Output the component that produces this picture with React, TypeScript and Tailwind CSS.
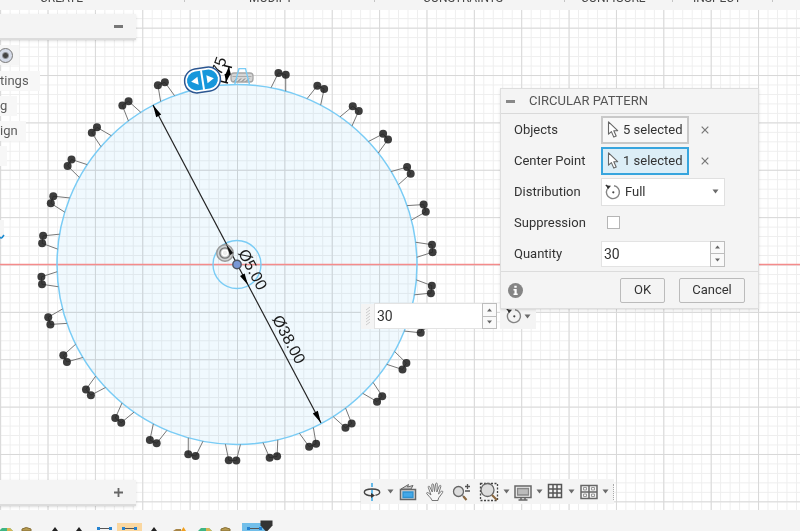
import React, { useState } from "react";

const CX = 237;
const CY = 264.5;
const R = 180;
const UNIT = 180 / 19;

function polar(radius: number, degrees: number) {
  const a = (degrees * Math.PI) / 180;
  return { x: CX + radius * Math.sin(a), y: CY - radius * Math.cos(a) };
}

// One patterned tooth: two end points joined to the rim of the big circle.
function Tooth({ angle }: { angle: number }) {
  const a = polar(R, angle - 2.4);
  const b = polar(196, angle - 1.1);
  const c = polar(196, angle + 1.1);
  const d = polar(R, angle + 2.4);
  return (
    <g>
      <path d={`M${a.x} ${a.y}L${b.x} ${b.y}L${c.x} ${c.y}L${d.x} ${d.y}`} fill="none" stroke="#777" strokeWidth="1" />
      <circle cx={b.x} cy={b.y} r="4" fill="#222" fillOpacity="0.88" />
      <circle cx={c.x} cy={c.y} r="4" fill="#222" fillOpacity="0.88" />
    </g>
  );
}

function GridLines() {
  const major = UNIT * 5;
  return (
    <>
      <defs>
        <pattern id="minor" x={CX} y={CY} width={UNIT} height={UNIT} patternUnits="userSpaceOnUse">
          <path d={`M0.5 0V${UNIT}M0 0.5H${UNIT}`} stroke="#eeeeee" strokeWidth="1" />
        </pattern>
        <pattern id="major" x={CX} y={CY} width={major} height={major} patternUnits="userSpaceOnUse">
          <path d={`M0.5 0V${major}M0 0.5H${major}`} stroke="#d8d8d8" strokeWidth="1" />
        </pattern>
      </defs>
      <rect width="100%" height="2000" fill="url(#minor)" />
      <rect width="100%" height="2000" fill="url(#major)" />
    </>
  );
}

function Sketch() {
  const teeth = Array.from({ length: 28 }, (_, i) => 13.3 + i * 12);
  return (
    <svg className="absolute inset-0 h-full w-full" aria-label="Sketch canvas">
      <g transform="translate(0 -10)">
        <circle cx={CX} cy={CY} r={R} fill="#f0f9fe" />
        <g className="mix-blend-multiply">
          <GridLines />
        </g>
        <path d="M0 264.5H4000" stroke="#f58b8b" strokeWidth="1.6" />
        <circle cx={CX} cy={CY} r={R} fill="none" stroke="#7accf5" strokeWidth="1.5" />
        <circle cx={CX} cy={CY} r="24" fill="none" stroke="#7accf5" strokeWidth="1.4" />
        {teeth.map((t) => (
          <Tooth key={t} angle={t} />
        ))}

        <path d="M153 105L321 423" stroke="#222" strokeWidth="1.2" />
        <path d="M153 105l8.2 9.6-5 2.6zM321 423l-8.2-9.6 5-2.6z" fill="#000" />
        <path d="M226 244l8 9-4.6 2.6zM248 285l-8-9 4.6-2.6z" fill="#000" />

        <g fontFamily="Liberation Sans, Arial, sans-serif" fontSize="16" fill="#1b1b1b">
          <text textAnchor="middle" transform="translate(248 272) rotate(62)">Ø5.00</text>
          <text textAnchor="middle" transform="translate(284 342) rotate(62)">Ø38.00</text>
          <text transform="translate(221 76) rotate(-70)">75</text>
        </g>

        <g fill="none" stroke="#999">
          <circle cx="225" cy="253" r="8.2" fill="#c9c9c9" fillOpacity="0.8" strokeWidth="1.4" />
          <circle cx="225" cy="253" r="5.2" stroke="#777" strokeWidth="1.3" />
          <circle cx="225" cy="253" r="2.8" fill="#eee" stroke="#fff" strokeWidth="1.3" />
        </g>
        <path d="M226 244l7 9-3 2z" fill="#111" />
        <circle cx={CX} cy={CY} r="4.2" fill="#7897d6" stroke="#4c5362" strokeWidth="1.4" />

        <path d="M224 65.500l8 2M220 81l8 2M229 67l-3 15" stroke="#111" strokeWidth="1.4" />
        <path d="M229 67l2 8h-6zM226 82l-1.500-8h6z" fill="#000" />
        <rect x="231" y="73" width="22" height="9" rx="3" fill="#d5d5d5" stroke="#a5a5a5" strokeWidth="1.3" />
        <path d="M232.500 76.500h19" stroke="#aaa" />
        <path d="M234 81.500l3-3M238 81.500l3-3M242 81.500l3-3M246 81.500l3-3" stroke="#777" />
        <path d="M234.700 84.500L239 68.600h6.500l4 16" fill="none" stroke="#7accf5" strokeWidth="1.4" />

        <g transform="translate(202.500 80) rotate(-9)">
          <rect x="-18" y="-12" width="36" height="24" rx="12" fill="#fff" stroke="#2b5691" strokeWidth="1.5" />
          <rect x="-15.500" y="-9.500" width="31" height="19" rx="9.500" fill="#1797db" />
          <path d="M0-10V10" stroke="#fff" strokeWidth="2" />
          <path d="M-11.500 0l7-4v8zM11.500 0l-7-4v8z" fill="#fff" />
        </g>
      </g>
    </svg>
  );
}

function Caret() {
  return (
    <svg width="7" height="5" viewBox="0 0 7 5" aria-hidden="true">
      <path d="M0.500 0.500h6L3.500 4.500z" fill="#6b6b6b" />
    </svg>
  );
}

function CursorIcon() {
  return (
    <svg width="12" height="17" viewBox="0 0 12 17" aria-hidden="true">
      <path
        d="M1.500 .8v12.400l2.900-2.600 2.400 5.500 2.400-1-2.400-5.300 3.900-.2z"
        fill="#fff"
        stroke="#666"
        strokeWidth="1.100"
        strokeLinejoin="round"
      />
    </svg>
  );
}

function FullCircleIcon() {
  return (
    <svg width="16" height="16" viewBox="0 0 16 16" fill="none" aria-hidden="true">
      <path d="M9 1.700a6.500 6.500 0 1 1-6.900 3.500" stroke="#858585" strokeWidth="1.400" />
      <path d="M1.500 1.500l4.500.3-3.300 4z" fill="#333" />
      <path d="M.8 1l3 2.500" stroke="#333" strokeWidth="1.400" />
      <circle cx="8.300" cy="8.300" r="1.100" fill="#444" />
    </svg>
  );
}

function CrossButton({ label }: { label: string }) {
  return (
    <button aria-label={label} className="ml-2 flex h-4 w-4 items-center justify-center">
      <svg width="8" height="8" viewBox="0 0 8 8" aria-hidden="true">
        <path d="M.7.7l6.600 6.600M7.300.7L.7 7.300" stroke="#777" strokeWidth="1.200" />
      </svg>
    </button>
  );
}

type NumberBoxProps = { id: string; label?: string; value: number; onChange: (n: number) => void; width: string };

function NumberBox({ id, label, value, onChange, width }: NumberBoxProps) {
  return (
    <div className="flex items-center">
      <input
        id={id}
        aria-label={label}
        inputMode="numeric"
        value={value}
        onChange={(e) => onChange(Number(e.target.value) || 0)}
        className={`h-[26px] border border-[#e3e3e3] bg-white pl-0.5 text-[14px] text-[#333] outline-none ${width}`}
      />
      <div className="-ml-px flex h-[26px] w-[15px] flex-col border border-[#bdbdbd] bg-[#fafafa]">
        <button aria-label="Increase" onClick={() => onChange(value + 1)} className="flex flex-1 items-center justify-center border-b border-[#bdbdbd]">
          <svg width="5" height="4" viewBox="0 0 5 4" aria-hidden="true">
            <path d="M0 3.500h5L2.500.5z" fill="#666" />
          </svg>
        </button>
        <button aria-label="Decrease" onClick={() => onChange(value - 1)} className="flex flex-1 items-center justify-center">
          <svg width="5" height="4" viewBox="0 0 5 4" aria-hidden="true">
            <path d="M0 .5h5L2.500 3.500z" fill="#666" />
          </svg>
        </button>
      </div>
    </div>
  );
}

function Row({ label, htmlFor, children }: { label: string; htmlFor: string; children: React.ReactNode }) {
  return (
    <div className="grid h-[31px] grid-cols-[87px_1fr] items-center">
      <label htmlFor={htmlFor}>{label}</label>
      <div className="flex items-center">{children}</div>
    </div>
  );
}

type PatternProps = { quantity: number; setQuantity: (n: number) => void };

function PatternDialog({ quantity, setQuantity }: PatternProps) {
  return (
    <section className="absolute top-[78px] left-[500px] w-[259px] border border-[#dedede] bg-[#f4f4f4] text-[13px] text-[#333] shadow-sm">
      <header className="flex h-[25px] items-center gap-[14px] border-b border-[#d9d9d9] pl-[5px] text-[#555]">
        <button aria-label="Collapse" className="h-[3px] w-[9px] bg-[#888]" />
        <h2>CIRCULAR PATTERN</h2>
      </header>
      <div className="pb-0.5 pl-[13px]">
        <Row label="Objects" htmlFor="objects">
          <button id="objects" className="flex h-7 w-[88px] items-center gap-1 border-2 border-[#c9c9c9] bg-[#f8f8f8] pl-1 whitespace-nowrap">
            <CursorIcon />5 selected
          </button>
          <CrossButton label="Clear objects" />
        </Row>
        <Row label="Center Point" htmlFor="center">
          <button id="center" className="flex h-7 w-[88px] items-center gap-1 border-2 border-[#37a5de] bg-[#dceef7] pl-1 whitespace-nowrap">
            <CursorIcon />1 selected
          </button>
          <CrossButton label="Clear center point" />
        </Row>
        <Row label="Distribution" htmlFor="distribution">
          <div className="relative">
            <select id="distribution" className="h-7 w-[124px] appearance-none border border-[#e0e0e0] bg-white pl-[23px] outline-none">
              <option>Full</option>
            </select>
            <span className="pointer-events-none absolute top-1.5 left-1">
              <FullCircleIcon />
            </span>
            <span className="pointer-events-none absolute inset-y-0 right-1.5 flex items-center">
              <Caret />
            </span>
          </div>
        </Row>
        <Row label="Suppression" htmlFor="suppression">
          <input id="suppression" type="checkbox" className="ml-1.5 h-[13px] w-[13px] appearance-none border border-[#b5b5b5] bg-white" />
        </Row>
        <Row label="Quantity" htmlFor="quantity">
          <NumberBox id="quantity" value={quantity} onChange={setQuantity} width="w-[110px]" />
        </Row>
      </div>
      <footer className="flex h-[37px] items-center border-t border-[#dcdcdc] pr-[13px] pl-[7px]">
        <button aria-label="Information">
          <svg width="15" height="15" viewBox="0 0 15 15" aria-hidden="true">
            <circle cx="7.500" cy="7.500" r="7.500" fill="#858585" />
            <path d="M6.300 2.800h2.400v2H6.300zM5.500 6h3.200v4.500h1V12h-4.200v-1.500h1v-3h-1z" fill="#fff" />
          </svg>
        </button>
        <button className="ml-auto h-[25px] w-[45px] rounded-xs border border-[#bbb]">OK</button>
        <button className="ml-[14px] h-[25px] w-[66px] rounded-xs border border-[#bbb]">Cancel</button>
      </footer>
    </section>
  );
}

function QuantityFloat({ quantity, setQuantity }: PatternProps) {
  return (
    <div className="absolute top-[293px] left-[361px] flex items-center">
      <div className="flex h-[25px] w-[13px] items-center justify-center bg-[#f4f4f4]">
        <svg width="6" height="20" viewBox="0 0 6 20" aria-hidden="true">
          <path d="M1 4l4-3M1 7l4-3M1 10l4-3M1 13l4-3M1 16l4-3M1 19l4-3" stroke="#ccc" />
        </svg>
      </div>
      <NumberBox id="canvas-quantity" label="Quantity on canvas" value={quantity} onChange={setQuantity} width="w-[109px]" />
      <button aria-label="Distribution type" className="ml-[3px] flex h-[25px] w-[36px] items-center gap-0.5 bg-[#f4f4f4] pl-1.5">
        <FullCircleIcon />
        <Caret />
      </button>
    </div>
  );
}

function MenuCaret({ label, className }: { label: string; className: string }) {
  return (
    <button aria-label={label} className={`flex h-full items-center justify-center ${className}`}>
      <Caret />
    </button>
  );
}

function Tool({ label, className, children }: { label: string; className: string; children: React.ReactNode }) {
  return (
    <button aria-label={label} className={`flex items-center justify-center ${className}`}>
      <svg width="20" height="20" viewBox="0 0 20 20" fill="none" stroke="#666" strokeWidth="1.300" aria-hidden="true">
        {children}
      </svg>
    </button>
  );
}

function NavigationBar() {
  return (
    <nav className="absolute bottom-1.5 left-[361px] flex h-[25px] items-center bg-[#f4f4f4]">
      <Tool label="Orbit" className="w-[22px]">
        <path d="M10 1v4M10 7v6M10 15v4" stroke="#35a5e5" strokeWidth="1.500" />
        <path d="M13.500 13.300c2.600-.5 4.200-1.500 4.200-3 0-2-3.400-3.300-7.700-3.300s-7.700 1.300-7.700 3.300 3.400 3.400 7 3.400" stroke="#444" strokeWidth="1.400" />
        <path d="M9 11l4 2.500L9 16z" fill="#333" stroke="none" />
      </Tool>
      <MenuCaret label="Orbit options" className="w-[14px]" />
      <Tool label="Look at" className="w-[22px]">
        <path d="M2.500 7.500h15v10h-15z" fill="#ddd" strokeWidth="1.500" />
        <path d="M5 10h10v5.500H5z" fill="#43a8e8" stroke="#2f91cf" />
        <path d="M3 7l7.500-4.500-1 2.500 5.500-1.500-2 3.500z" fill="#ccc" strokeWidth="1" />
      </Tool>
      <Tool label="Pan" className="w-8">
        <path
          d="M7 18.500c-.5-2-2-3-5-6.500-1-1.200.2-2 1.200-1.200L6 13 3.300 5.500c-.5-1.400 1-1.900 1.500-.6L7.300 10 6.800 3c0-1.500 1.600-1.500 1.800 0L9.500 9.500 10.600 2c.2-1.400 1.900-1.200 1.700.3L11.800 10l2.500-6c.6-1.300 2-.7 1.500.7L13.500 12l2.700-2.600c1-.9 2.300.1 1.300 1.300L14 15.500c-.7 1-1 2-1 3z"
          fill="#f8f8f8"
          stroke="#777"
          strokeWidth="1"
        />
      </Tool>
      <Tool label="Zoom" className="w-[22px]">
        <circle cx="6.500" cy="9.500" r="5" fill="#ddd" />
        <path d="M10.500 13.500l1.500 1.500" />
        <path d="M11.500 14.500l3 3.500" stroke="#8b6840" strokeWidth="2.200" />
        <path d="M13 4.500h5M15.500 2v5M13 9h5" stroke="#555" />
      </Tool>
      <Tool label="Fit" className="ml-1 w-6">
        <path d="M1.500 1.500h17v17h-17z" strokeDasharray="2 1.500" stroke="#444" />
        <circle cx="8.500" cy="8" r="6.500" fill="#ddd" />
        <path d="M13 13l5 5" stroke="#8b6840" strokeWidth="2.200" />
      </Tool>
      <MenuCaret label="Fit options" className="w-2.5" />
      <Tool label="Display settings" className="ml-0.5 w-5">
        <path d="M2 4h16v11.500H2z" fill="#f4f4f4" strokeWidth="1.500" />
        <path d="M4.500 6.500h11v6.500h-11z" fill="#bbb" stroke="#888" />
        <path d="M8 15.500v2M12 15.500v2M5.500 18h9" strokeWidth="1.500" />
      </Tool>
      <MenuCaret label="Display options" className="w-3" />
      <Tool label="Grid and snaps" className="w-5">
        <path d="M3.500 2.500h13v13h-13zM8 2.500v13M12 2.500v13M3.500 7h13M3.500 11h13" stroke="#555" strokeWidth="1.500" />
      </Tool>
      <MenuCaret label="Grid options" className="w-3" />
      <Tool label="Viewports" className="w-6">
        <path d="M2 3.500h16v13H2zM10 3.500v13M2 10h16" strokeWidth="1.500" />
        <path d="M4.500 5.500h3v2.500h-3zM12.500 5.500h3v2.500h-3zM4.500 12h3v2.500h-3zM12.500 12h3v2.500h-3z" stroke="#999" strokeWidth="1" />
      </Tool>
      <MenuCaret label="Viewport options" className="w-2" />
      <span className="ml-1 h-4 border-l border-dotted border-[#aaa]" />
    </nav>
  );
}

function Browser() {
  return (
    <aside className="absolute top-1 left-0 flex w-[136px] flex-col items-start text-[13px] text-[#5c5c5c]">
      <div className="flex h-[26px] w-full items-center justify-end border-b-2 border-[#dcdcdc] bg-[#f4f4f4] pr-[13px] shadow-sm">
        <button aria-label="Collapse browser" className="h-[3px] w-[9px] bg-[#777]" />
      </div>
      <div className="mt-[5px] flex h-5 w-[19px] items-center bg-[#f5f5f5]">
        <label className="-ml-0.5">
          <input type="radio" defaultChecked aria-label="Active component" className="block h-[15px] w-[15px] appearance-none rounded-full border border-[#777] bg-[radial-gradient(circle,#444_0_2px,#d5dbe8_4px)]" />
        </label>
      </div>
      <div className="mt-1.5 h-5 w-10 bg-[#f7f7f7] leading-5">tings</div>
      <div className="mt-[5px] h-5 w-[17px] bg-[#f7f7f7] leading-5">g</div>
      <div className="mt-[5px] h-5 w-[26px] bg-[#f7f7f7] leading-5">ign</div>
      <div className="mt-[5px] h-5 w-[7px] bg-[#f7f7f7]" />
      <svg className="mt-[54px]" width="5" height="20" viewBox="0 0 5 20" aria-hidden="true">
        <path d="M0 0h4v16H0z" fill="#f5f5f5" />
        <path d="M0 17c1 2 2 1 4-2" fill="none" stroke="#1688d0" strokeWidth="1.500" />
      </svg>
    </aside>
  );
}

const menus = [
  { name: "CREATE", cell: "w-[185px] pl-10" },
  { name: "MODIFY", cell: "w-[190px] pl-16" },
  { name: "CONSTRAINTS", cell: "w-[190px] pl-12" },
  { name: "CONFIGURE", cell: "w-[108px] pl-4" },
  { name: "INSPECT", cell: "w-[100px] pl-5" },
];

function MenuStrip() {
  return (
    <header className="flex h-[10px] shrink-0 items-start overflow-hidden bg-[#f4f4f4] text-[12px] text-[#444]">
      {menus.map((m) => (
        <div key={m.name} className={`-mt-3 h-[14px] shrink-0 border-r border-[#c4c4c4] leading-5 ${m.cell}`}>
          <button className="block">{m.name}</button>
        </div>
      ))}
    </header>
  );
}

function Timeline() {
  return (
    <footer className="h-[21px] shrink-0 overflow-hidden bg-[#f4f4f4]">
      <svg width="290" height="21" viewBox="0 0 290 21" aria-label="Timeline">
        <rect x="117" y="13" width="25" height="8" fill="#fad7a0" />
        <rect x="242" y="13" width="25" height="8" fill="#72bfea" />
        {[0, 199].map((x) => (
          <g key={x} transform={`translate(${x} 0)`}>
            <path d="M-1 21l3-3h8l3 3z" fill="#3fb583" />
            <path d="M7 18h3l3 3H7z" fill="#d6b454" />
          </g>
        ))}
        {[22, 221].map((x) => (
          <path key={x} d={`M${x} 21v-2q4-3 9 0v2z`} fill="#b69a4e" stroke="#887038" />
        ))}
        {[55, 79, 154].map((x) => (
          <path key={x} d={`M${x} 17l3 4h-6z`} fill="#222" />
        ))}
        {[97, 122, 247].map((x) => (
          <g key={x}>
            <path d={`M${x + 2} 18.500h11`} stroke="#555" />
            <path d={`M${x} 17h3v3h-3zM${x + 12} 17h3v3h-3z`} fill="#2582d0" />
          </g>
        ))}
        <path d="M173 21l3-2h5v2z" fill="#a88648" />
        <path d="M181 21l2.500-4 2.500 4z" fill="#f0a020" />
        <path d="M260.500 10.500h12v5l-5 5.500h-2l-5-5.500z" fill="#333" />
      </svg>
    </footer>
  );
}

export default function App() {
  const [quantity, setQuantity] = useState(30);
  return (
    <div className="flex h-screen flex-col overflow-hidden bg-white font-['Roboto',sans-serif]">
      <MenuStrip />
      <main className="relative flex-1 overflow-hidden">
        <Sketch />
        <Browser />
        <QuantityFloat quantity={quantity} setQuantity={setQuantity} />
        <PatternDialog quantity={quantity} setQuantity={setQuantity} />
        <NavigationBar />
        <div className="absolute bottom-1 left-0 flex h-[26px] w-[136px] items-center justify-end border-b-2 border-[#dcdcdc] bg-[#f4f4f4] pr-[13px] shadow-sm">
          <button aria-label="Expand comments">
            <svg className="block" width="9" height="9" viewBox="0 0 9 9" aria-hidden="true">
              <path d="M4.500 0v9M0 4.500h9" stroke="#666" strokeWidth="1.800" />
            </svg>
          </button>
        </div>
      </main>
      <Timeline />
    </div>
  );
}
